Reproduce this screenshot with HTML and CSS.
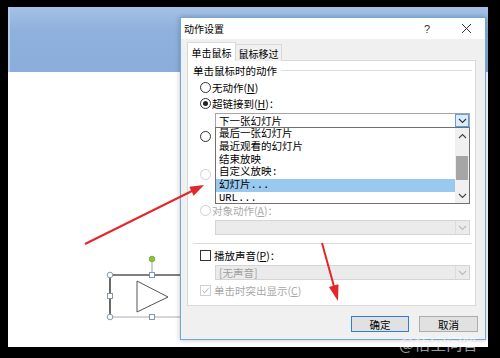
FILE: index.html
```html
<!DOCTYPE html>
<html lang="zh">
<head>
<meta charset="utf-8">
<link rel="stylesheet" href="styles.css">
</head>
<body>
<div class="screen">
  <div class="slide">
    <div class="band"></div>
    <svg class="shape" viewBox="8 7 480 340" width="480" height="340">
      <line x1="110" y1="275" x2="190" y2="275" stroke="#555" stroke-width="1.6"/>
      <line x1="110" y1="275" x2="110" y2="317" stroke="#444" stroke-width="1.6"/>
      <line x1="110" y1="317" x2="190" y2="317" stroke="#a9adb2" stroke-width="1"/>
      <line x1="152" y1="261" x2="152" y2="275" stroke="#8fa3bc" stroke-width="1"/>
      <circle cx="152" cy="259" r="2.8" fill="#8cc63e" stroke="#6f9e35" stroke-width="0.8"/>
      <polygon points="137,281 168,297 137,312" fill="none" stroke="#555" stroke-width="1"/>
      <circle cx="110" cy="275" r="2.8" fill="#fff" stroke="#7b8da3" stroke-width="0.9"/>
      <circle cx="110" cy="317" r="2.8" fill="#fff" stroke="#7b8da3" stroke-width="0.9"/>
      <rect x="107.5" y="293.5" width="5" height="5" fill="#fff" stroke="#7b8da3" stroke-width="0.9"/>
      <rect x="149.5" y="272.5" width="5" height="5" fill="#fff" stroke="#7b8da3" stroke-width="0.9"/>
      <rect x="149.5" y="314.5" width="5" height="5" fill="#fff" stroke="#7b8da3" stroke-width="0.9"/>
    </svg>
  </div>

  <div class="dialog">
    <div class="titlebar">
      <span class="title">动作设置</span>
      <span class="help">?</span>
      <span class="close">
        <svg width="11" height="11" viewBox="0 0 11 11"><path d="M1 1L10 10M10 1L1 10" stroke="#333" stroke-width="1"/></svg>
      </span>
    </div>
    <div class="body">
      <div class="tabs">
        <div class="tab active">单击鼠标</div>
        <div class="tab">鼠标移过</div>
      </div>
      <div class="panel">
        <div class="group-head"><span>单击鼠标时的动作</span><i class="rule"></i></div>
        <div class="row"><span class="radio"></span><span>无动作(<u>N</u>)</span></div>
        <div class="row"><span class="radio on"></span><span>超链接到(<u>H</u>)：</span></div>
        <div class="select active"><span class="val">下一张幻灯片</span><span class="drop"><svg width="9" height="6" viewBox="0 0 9 6"><path d="M1 1L4.5 4.5L8 1" fill="none" stroke="#333" stroke-width="1.1"/></svg></span></div>
        <div class="row r3"><span class="radio"></span></div>
        <div class="select field-hidden"></div>
        <div class="row r4 dis"><span class="radio"></span></div>
        <div class="select dis"></div>
        <div class="row r5 dis"><span class="radio"></span><span>对象动作(<u>A</u>)：</span></div>
        <div class="select dis"><span class="val"></span><span class="drop"><svg width="9" height="6" viewBox="0 0 9 6"><path d="M1 1L4.5 4.5L8 1" fill="none" stroke="#bbb" stroke-width="1.1"/></svg></span></div>
        <div class="sep"></div>
        <div class="row r6"><span class="check"></span><span>播放声音(<u>P</u>)：</span></div>
        <div class="select dis"><span class="val">[无声音]</span><span class="drop"><svg width="9" height="6" viewBox="0 0 9 6"><path d="M1 1L4.5 4.5L8 1" fill="none" stroke="#bbb" stroke-width="1.1"/></svg></span></div>
        <div class="row r7 dis"><span class="check checked"><svg width="9" height="9" viewBox="0 0 9 9"><path d="M1.5 4.5L3.6 6.8L7.8 1.8" fill="none" stroke="#b5b5b5" stroke-width="1"/></svg></span><span>单击时突出显示(<u>C</u>)</span></div>

        <div class="list">
          <ul class="items">
            <li>最后一张幻灯片</li>
            <li>最近观看的幻灯片</li>
            <li>结束放映</li>
            <li>自定义放映:</li>
            <li class="sel">幻灯片...</li>
            <li>URL...</li>
          </ul>
          <div class="scroll">
            <span class="arr"><svg width="9" height="6" viewBox="0 0 9 6"><path d="M1 5L4.5 1.5L8 5" fill="none" stroke="#444" stroke-width="1.1"/></svg></span>
            <span class="track"><i class="thumb"></i></span>
            <span class="arr"><svg width="9" height="6" viewBox="0 0 9 6"><path d="M1 1L4.5 4.5L8 1" fill="none" stroke="#444" stroke-width="1.1"/></svg></span>
          </div>
        </div>
      </div>
      <div class="buttons">
        <div class="btn default">确定</div>
        <div class="btn">取消</div>
      </div>
    </div>
  </div>

  <svg class="arrows" viewBox="8 7 480 340" width="480" height="340">
    <line x1="85" y1="244" x2="194" y2="190" stroke="#e3262a" stroke-width="2"/>
    <polygon points="204,185 193.7,195.7 189.3,186.7" fill="#e3262a"/>
    <line x1="322" y1="243" x2="335" y2="290" stroke="#e3262a" stroke-width="2"/>
    <polygon points="338,301 338.5,284.3 328.9,286.9" fill="#e3262a"/>
  </svg>
  <div class="watermark">@悟空问答</div>
</div>
</body>
</html>
```

FILE: styles.css
```css
* { box-sizing: border-box; }
html, body { margin: 0; padding: 0; }
body {
  background: #000;
  width: 500px;
  height: 358px;
  overflow: hidden;
  font-family: "Noto Sans CJK SC", "Liberation Sans", sans-serif;
  font-size: 10.5px;
  color: #000;
}
.screen {
  position: relative;
  margin: 7px 0 0 8px;
  width: 480px;
  height: 340px;
  background: #fff;
}
.slide { width: 480px; height: 340px; position: relative; }
.band {
  height: 65px;
  background: linear-gradient(180deg, #a5c2e5 0%, #8fb1dc 35%, #8aaddb 100%);
  border-left: 2px solid #b3cbe8;
}
.shape { position: absolute; left: 0; top: 0; }

.dialog {
  position: absolute;
  left: 172px;
  top: 10px;
  width: 306px;
  height: 323px;
  border: 1px solid #72a7dc;
  background: #f0f0f0;
  box-shadow: 0 0 5px rgba(0,0,0,0.25);
  display: flex;
  flex-direction: column;
}
.titlebar {
  height: 21px;
  background: #fff;
  display: flex;
  align-items: center;
  padding: 0 12px 0 3px;
  font-size: 10px;
}
.title { flex: 1; }
.help { width: 14px; text-align: center; font-family: "Liberation Sans", sans-serif; font-size: 11px; color: #333; }
.close { width: 14px; margin-left: 25px; display: flex; justify-content: center; }

.body { flex: 1; padding: 3px 7px 0 6px; display: flex; flex-direction: column; }
.tabs { display: flex; align-items: flex-end; height: 19px; margin-bottom: -1px; position: relative; z-index: 1; }
.tab {
  height: 17px;
  width: 46px;
  border: 1px solid #d9d9d9;
  border-left: none;
  border-bottom: none;
  background: #f0f0f0;
  font-size: 10px;
  display: flex;
  align-items: center;
  justify-content: center;
}
.tab.active { width: 49px; height: 19px; background: #fff; border-left: 1px solid #d9d9d9; }

.panel {
  width: 289px;
  height: 246px;
  background: #fff;
  border: 1px solid #d9d9d9;
  position: relative;
  display: flex;
  flex-direction: column;
}
.group-head { height: 18px; display: flex; align-items: center; padding: 0 3px 0 5px; }
.group-head .rule { flex: 1; height: 0; border-top: 1px solid #dcdcdc; margin-left: 4px; margin-top: 1px; }

.row { height: 16px; display: flex; align-items: center; padding-left: 12px; white-space: nowrap; }
.row.dis { color: #a8a8a8; }
.r3 { margin-top: 0; }
.r4 { margin-top: 5px; }
.r5 { margin-top: 3px; }
.r6 { margin-top: 3px; padding-left: 12px; }
.r7 { margin-top: 2px; }
.row u { text-decoration: underline; }

.radio {
  width: 11px; height: 11px;
  border: 1px solid #333;
  border-radius: 50%;
  margin-right: 1px;
  background: #fff;
  position: relative;
  flex: none;
}
.radio.on::after {
  content: "";
  position: absolute;
  left: 2px; top: 2px;
  width: 5px; height: 5px;
  border-radius: 50%;
  background: #222;
}
.dis .radio { border-color: #cfcfcf; }
.check {
  width: 11px; height: 11px;
  border: 1px solid #333;
  background: #fff;
  margin-right: 3px;
  flex: none;
  display: flex; align-items: center; justify-content: center;
}
.check.checked { border-color: #cfcfcf; }

.select {
  margin: 2px 0 0 27px;
  width: 255px;
  height: 15px;
  border: 1px solid #a6a6a6;
  background: #fff;
  display: flex;
  align-items: center;
}
.select .val { flex: 1; padding-left: 3px; white-space: nowrap; }
.select .drop {
  width: 14px; height: 13px;
  display: flex; align-items: center; justify-content: center;
}
.select.active .drop { background: #dcecfc; border: 1px solid #5c9ee0; margin-right: 0; }
.select.dis { background: #ebebeb; border-color: #d4d4d4; color: #a0a0a0; }
.select.dis .drop { border-left: 1px solid #dcdcdc; }

.sep { margin: 8px 3px 0 5px; height: 1px; background: #dcdcdc; }

.list {
  position: absolute;
  left: 27px;
  top: 66px;
  width: 255px;
  height: 77px;
  border: 1px solid #707070;
  background: #fff;
  display: flex;
  overflow: hidden;
  z-index: 2;
}
.items {
  list-style: none;
  margin: 0;
  padding: 0;
  flex: 1;
  font-family: "Liberation Mono", "Noto Sans CJK SC", monospace;
  font-size: 10.5px;
}
.items li { height: 12.8px; line-height: 12.8px; padding-left: 3px; white-space: nowrap; }
.items li.sel { background: #99c9ef; }
.scroll {
  width: 14px;
  background: #f0f0f0;
  display: flex;
  flex-direction: column;
}
.scroll .arr { height: 15px; display: flex; align-items: center; justify-content: center; }
.scroll .track { flex: 1; position: relative; }
.scroll .thumb { position: absolute; left: 1px; right: 1px; top: 13px; height: 24px; background: #a6a6a6; }

.buttons { display: flex; justify-content: flex-end; gap: 10px; margin-top: 10px; }
.btn {
  width: 58px;
  height: 16px;
  border: 1px solid #adadad;
  background: #e1e1e1;
  display: flex;
  align-items: center;
  justify-content: center;
  font-size: 10.5px;
}
.btn.default { border: 1px solid #2a7fd4; }
.btn + .btn { width: 59px; }

.arrows { position: absolute; left: 0; top: 0; pointer-events: none; z-index: 5; }
.watermark {
  position: absolute;
  left: 391px;
  top: 327px;
  font-size: 16px;
  line-height: 18px;
  color: rgba(255,255,255,0.6);
  z-index: 6;
  white-space: nowrap;
}
```
